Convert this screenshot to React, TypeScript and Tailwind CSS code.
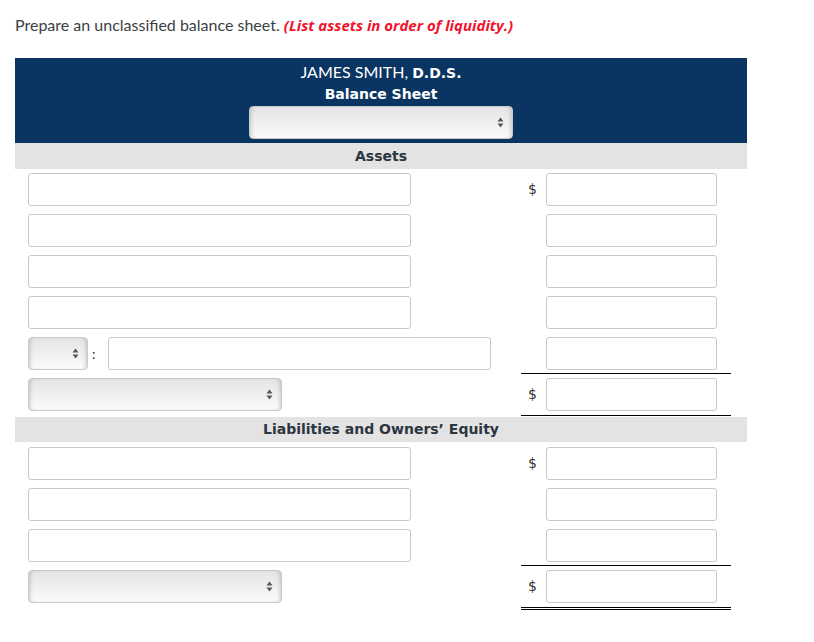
import React from "react";

function Arrows() {
  return (
    <svg width="7" height="11" viewBox="0 0 7 11" className="shrink-0">
      <path d="M3.5 0.5 L6.5 4.5 L0.5 4.5 Z" fill="#555" />
      <path d="M3.5 10.5 L6.5 6.5 L0.5 6.5 Z" fill="#555" />
    </svg>
  );
}

function Select({ w }: { w: string }) {
  return (
    <div
      className={`${w} h-[33px] rounded-[4px] border border-[#c9c9c9] bg-linear-to-b from-[#e4e4e4] to-[#fbfbfb] shadow-[inset_4px_0_4px_-3px_rgba(0,0,0,0.18),inset_-4px_0_4px_-3px_rgba(0,0,0,0.18)] flex items-center justify-end pr-[8px]`}
    >
      <Arrows />
    </div>
  );
}

function Input({ w }: { w: string }) {
  return <div className={`${w} h-[33px] rounded-[3px] border border-[#c8c8c8] bg-white`} />;
}

function Row({
  left,
  dollar,
  line,
}: {
  left: React.ReactNode;
  dollar?: boolean;
  line?: "single" | "double";
}) {
  const border =
    line === "single"
      ? "border-b border-black h-[41px]"
      : line === "double"
      ? "border-b-[3px] border-double border-black h-[44px]"
      : "h-[41px]";
  return (
    <div className="flex">
      <div className="w-[506px] h-[41px] pl-[13px] flex items-center">{left}</div>
      <div className={`w-[210px] flex items-start pt-[4px] ${border}`}>
        <div className="w-[25px] h-[33px] flex items-center justify-end pr-[9px] font-['DejaVu_Sans',sans-serif] text-[14px] text-[#333]">
          {dollar ? "$" : ""}
        </div>
        <Input w="w-[171px]" />
      </div>
    </div>
  );
}

export default function App() {
  return (
    <div className="w-[814px] h-[642px] bg-white font-['Lato','Open_Sans',sans-serif] text-[#333]">
      <p className="pt-[14px] pl-[15px] text-[16px] leading-[22px] text-[#3a3f45]">
        Prepare an unclassified balance sheet.{" "}
        <span className="font-['Open_Sans',sans-serif] text-[15px] font-bold italic text-[#f0142d]">
          (List assets in order of liquidity.)
        </span>
      </p>
      <div className="ml-[15px] mt-[22px] w-[732px]">
        <div className="h-[85px] bg-[#0a3562] flex flex-col items-center pt-[3px] text-white">
          <div className="h-[21px] text-[16px] leading-[21px]">
            JAMES SMITH,{" "}
            <span className="font-['DejaVu_Sans',sans-serif] text-[14px] leading-[14px] font-bold">D.D.S.</span>
          </div>
          <div className="h-[21px] mt-[2px] font-['DejaVu_Sans',sans-serif] text-[14px] leading-[21px] font-bold">
            Balance Sheet
          </div>
          <div className="mt-[1px]">
            <Select w="w-[264px]" />
          </div>
        </div>
        <div className="h-[26px] bg-[#e3e3e3] flex items-center justify-center font-['DejaVu_Sans',sans-serif] text-[14px] font-bold text-[#2b3641]">
          Assets
        </div>
        <Row left={<Input w="w-[383px]" />} dollar />
        <Row left={<Input w="w-[383px]" />} />
        <Row left={<Input w="w-[383px]" />} />
        <Row left={<Input w="w-[383px]" />} />
        <Row
          left={
            <div className="flex items-center">
              <Select w="w-[60px]" />
              <span className="w-[20px] pl-[4px] text-[14px] text-[#333]">:</span>
              <Input w="w-[383px]" />
            </div>
          }
          line="single"
        />
        <Row left={<Select w="w-[254px]" />} dollar line="double" />
        <div className="h-[25px] -mt-[3px] relative">
          <div className="absolute inset-x-0 top-[2px] h-[25px] bg-[#e3e3e3] flex items-center justify-center font-['DejaVu_Sans',sans-serif] text-[14px] font-bold text-[#2b3641]">
            Liabilities and Owners’ Equity
          </div>
        </div>
        <div className="mt-[3px]">
          <Row left={<Input w="w-[383px]" />} dollar />
          <Row left={<Input w="w-[383px]" />} />
          <Row left={<Input w="w-[383px]" />} line="single" />
          <Row left={<Select w="w-[254px]" />} dollar line="double" />
        </div>
      </div>
    </div>
  );
}
